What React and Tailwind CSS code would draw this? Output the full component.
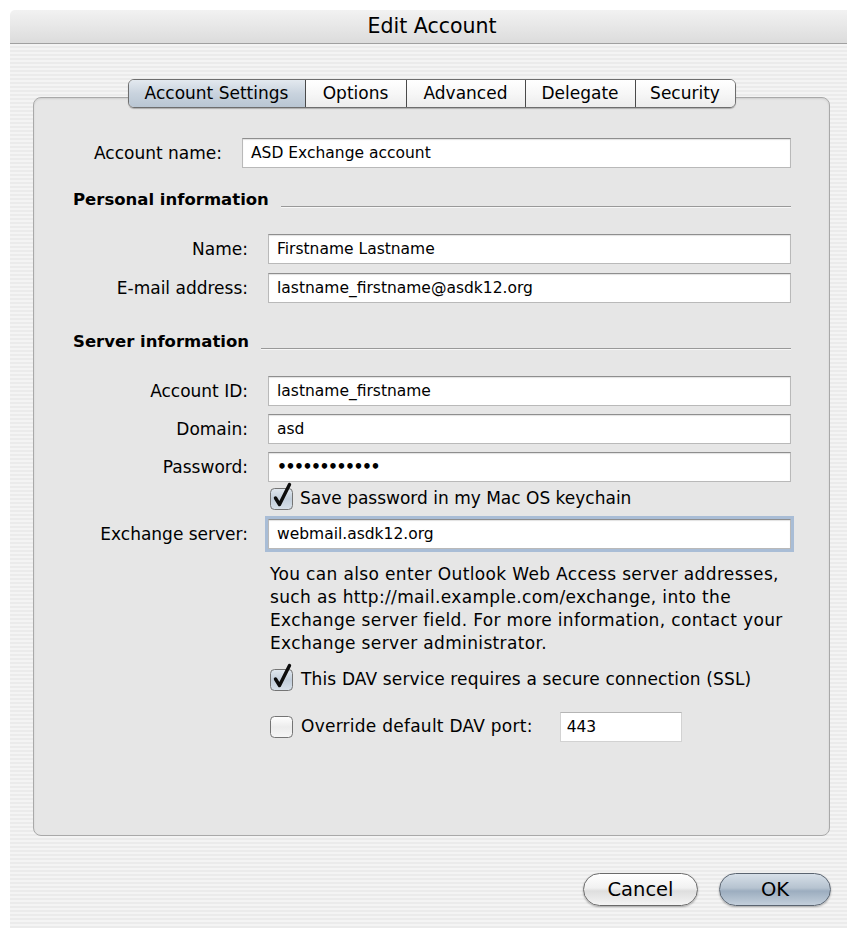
import React from 'react';

// Aqua-style checkbox, the tick overhangs the top edge of the box
const CheckBox = ({ checked }) => (
    <svg width="26" height="30" viewBox="0 0 26 30" className="shrink-0 -mt-[8px] overflow-visible">
        <defs>
            <linearGradient id={checked ? 'cbOn' : 'cbOff'} x1="0" y1="0" x2="0" y2="1">
                <stop offset="0" stopColor={checked ? '#e1e8ef' : '#ffffff'} />
                <stop offset="0.5" stopColor={checked ? '#c2cedb' : '#ececec'} />
                <stop offset="1" stopColor={checked ? '#d8e1ea' : '#f6f6f6'} />
            </linearGradient>
        </defs>
        <rect x="1.5" y="8.5" width="22" height="21" rx="4" fill={`url(#${checked ? 'cbOn' : 'cbOff'})`} stroke="#747474" />
        {checked && (
            <path d="M6.5 18 L10.5 24.5 L20.5 4.5" fill="none" stroke="#0d0d0d" strokeWidth="3.4" strokeLinecap="round" strokeLinejoin="round" />
        )}
    </svg>
);

const Field = ({ children, focused, className = '' }) => (
    <div
        className={`h-[30px] flex-1 flex items-start pt-[4px] pl-[8px] bg-white border border-[#b9b9b9] border-t-[#8e8e8e] shadow-[inset_0_1px_1px_rgba(0,0,0,0.12)] text-[15.5px] leading-[20px] whitespace-nowrap ${focused ? 'outline outline-[3px] outline-[#a9bdd6]' : ''} ${className}`}
    >
        {children}
    </div>
);

const Row = ({ label, labelWidth = 'w-[214px]', className = '', children }) => (
    <div className={`flex items-center ${className}`}>
        <div className={`${labelWidth} shrink-0 text-right text-[17px] leading-[20px]`}>{label}</div>
        <div className="ml-[20px] flex-1 flex">{children}</div>
    </div>
);

const Heading = ({ title, className = '' }) => (
    <div className={`flex items-center pl-[39px] h-[20px] ${className}`}>
        <span className="text-[16.5px] font-bold whitespace-nowrap">{title}</span>
        <div className="flex-1 ml-[12px] mt-[14px] border-t border-[#999] border-b border-b-[#f7f7f7]" />
    </div>
);

const tabs = [
    { name: 'Account Settings', w: 'w-[176px]' },
    { name: 'Options', w: 'w-[101px]' },
    { name: 'Advanced', w: 'w-[119px]' },
    { name: 'Delegate', w: 'w-[110px]' },
    { name: 'Security', w: 'w-[100px]' },
];

const App = () => {
    return (
        <div className="w-[847px] h-[928px] bg-white pl-[10px] pt-[10px] overflow-hidden font-['DejaVu_Sans',sans-serif] text-black">
            <div className="h-full flex flex-col rounded-tl-[5px] overflow-hidden">
                {/* title bar */}
                <div className="h-[34px] shrink-0 flex items-center justify-center pl-[7px] bg-gradient-to-b from-[#f2f2f2] to-[#dcdcdc] border-b border-[#a0a0a0] text-[20.5px]">
                    Edit Account
                </div>

                <div className="flex-1 flex flex-col pl-[23px] pt-[35px] bg-[image:repeating-linear-gradient(180deg,#f4f4f4_0px,#f4f4f4_2px,#ebebeb_2px,#ebebeb_4px)]">
                    <div className="w-[797px]">
                        {/* tab strip */}
                        <div className="relative z-10 flex justify-center">
                            <div className="flex h-[29px] border border-[#6e6e6e] rounded-[6px] overflow-hidden shadow-[0_1px_1px_rgba(0,0,0,0.25)]">
                                {tabs.map((t, i) => (
                                    <div
                                        key={t.name}
                                        className={`${t.w} flex items-center justify-center text-[17px] ${i > 0 ? 'border-l border-[#4a4a4a]' : ''} ${
                                            i === 0
                                                ? 'bg-gradient-to-b from-[#e3e9ef] via-[#c9d3de] to-[#b9c6d3]'
                                                : 'bg-gradient-to-b from-[#ffffff] via-[#f7f7f7] to-[#ececec]'
                                        }`}
                                    >
                                        {t.name}
                                    </div>
                                ))}
                            </div>
                        </div>

                        {/* group box */}
                        <div className="-mt-[11px] h-[739px] bg-[#e6e6e6] border border-[#a9a9a9] rounded-[8px] shadow-[inset_0_1px_2px_rgba(0,0,0,0.1)] pt-[40px] pr-[38px]">
                            <Row label="Account name:" labelWidth="w-[188px]">
                                <Field>ASD Exchange account</Field>
                            </Row>

                            <Heading title="Personal information" className="mt-[22px]" />

                            <Row label="Name:" className="mt-[24px]">
                                <Field>Firstname Lastname</Field>
                            </Row>
                            <Row label="E-mail address:" className="mt-[9px]">
                                <Field>lastname_firstname@asdk12.org</Field>
                            </Row>

                            <Heading title="Server information" className="mt-[29px]" />

                            <Row label="Account ID:" className="mt-[24px]">
                                <Field>lastname_firstname</Field>
                            </Row>
                            <Row label="Domain:" className="mt-[8px]">
                                <Field>asd</Field>
                            </Row>
                            <Row label="Password:" className="mt-[8px]">
                                <Field className="font-bold tracking-[-1.4px]">••••••••••••</Field>
                            </Row>

                            <div className="mt-[6px] h-[22px] flex items-center pl-[235px]">
                                <CheckBox checked />
                                <span className="ml-[5px] text-[17px] whitespace-nowrap">Save password in my Mac OS keychain</span>
                            </div>

                            <Row label="Exchange server:" className="mt-[9px]">
                                <Field focused>webmail.asdk12.org</Field>
                            </Row>

                            <p className="mt-[14px] ml-[236px] text-[17px] leading-[23px] tracking-[0.35px] whitespace-nowrap">
                                You can also enter Outlook Web Access server addresses,
                                <br />
                                such as http://mail.example.com/exchange, into the
                                <br />
                                Exchange server field. For more information, contact your
                                <br />
                                Exchange server administrator.
                            </p>

                            <div className="mt-[13px] h-[24px] flex items-center pl-[235px]">
                                <CheckBox checked />
                                <span className="ml-[6px] text-[17px] tracking-[0.15px] whitespace-nowrap">
                                    This DAV service requires a secure connection (SSL)
                                </span>
                            </div>

                            <div className="mt-[20px] h-[30px] flex items-center pl-[235px]">
                                <CheckBox />
                                <span className="ml-[6px] text-[17px] tracking-[0.25px] whitespace-nowrap">Override default DAV port:</span>
                                <div className="ml-[27px] w-[122px] h-[30px] flex items-start pt-[4px] pl-[6px] bg-white border border-[#d2d2d2] border-t-[#b5b5b5] text-[15.5px] leading-[20px]">
                                    443
                                </div>
                            </div>
                        </div>
                    </div>

                    {/* dialog buttons */}
                    <div className="mt-[37px] flex justify-end gap-[21px] pr-[16px]">
                        <button className="w-[115px] h-[33px] rounded-full border border-[#6a6a6a] bg-[linear-gradient(180deg,#ffffff_0%,#f1f1f1_45%,#dedede_55%,#f4f4f4_100%)] shadow-[0_1px_2px_rgba(0,0,0,0.3)] text-[19.5px] leading-none">
                            Cancel
                        </button>
                        <button className="w-[112px] h-[33px] rounded-full border border-[#5a6470] bg-[linear-gradient(180deg,#d6dfe8_0%,#b6c3d0_45%,#9cadbf_55%,#c3cfdb_100%)] shadow-[0_1px_2px_rgba(0,0,0,0.3)] text-[19.5px] leading-none">
                            OK
                        </button>
                    </div>
                </div>
            </div>
        </div>
    );
};

export default App;
